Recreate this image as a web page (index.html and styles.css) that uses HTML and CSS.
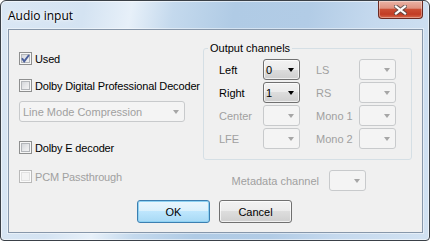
FILE: index.html
```html
<!DOCTYPE html>
<html>
<head>
<meta charset="utf-8">
<title>Audio input</title>
<link rel="stylesheet" href="styles.css">
</head>
<body>
<div class="window">
  <div class="titlebar">
    <span class="title">Audio input</span>
    <div class="close">
      <svg width="13" height="10" viewBox="0 0 13 10">
        <path d="M2 1.5 L11 8.5 M11 1.5 L2 8.5" stroke="#4a4a4a" stroke-opacity="0.75" stroke-width="4.2" stroke-linecap="square" fill="none"/>
        <path d="M2 1.5 L11 8.5 M11 1.5 L2 8.5" stroke="#ffffff" stroke-width="2.2" stroke-linecap="square" fill="none"/>
      </svg>
    </div>
  </div>
  <div class="client">
    <div class="main">
      <div class="left">
        <label class="check row-used"><span class="box"><svg width="9" height="9" viewBox="0 0 9 9"><polyline points="1,4.3 3.2,7.4 8,1" fill="none" stroke="#4a5f9c" stroke-width="1.9"/></svg></span>Used</label>
        <label class="check row-dolby"><span class="box"></span>Dolby Digital Professional Decoder</label>
        <div class="combo wide row-line"><span class="val">Line Mode Compression</span><span class="arrow"></span></div>
        <label class="check row-dolbye"><span class="box"></span>Dolby E decoder</label>
        <label class="check dis row-pcm"><span class="box"></span>PCM Passthrough</label>
      </div>
      <div class="right">
        <fieldset class="group">
          <legend>Output channels</legend>
          <div class="grid">
            <span class="lbl">Left</span>
            <span class="combo on"><span class="val">0</span><span class="arrow"></span></span>
            <span class="lbl dis col2">LS</span>
            <span class="combo"><span class="val"></span><span class="arrow"></span></span>

            <span class="lbl">Right</span>
            <span class="combo on"><span class="val">1</span><span class="arrow"></span></span>
            <span class="lbl dis col2">RS</span>
            <span class="combo"><span class="val"></span><span class="arrow"></span></span>

            <span class="lbl dis">Center</span>
            <span class="combo"><span class="val"></span><span class="arrow"></span></span>
            <span class="lbl dis col2">Mono 1</span>
            <span class="combo"><span class="val"></span><span class="arrow"></span></span>

            <span class="lbl dis">LFE</span>
            <span class="combo"><span class="val"></span><span class="arrow"></span></span>
            <span class="lbl dis col2">Mono 2</span>
            <span class="combo"><span class="val"></span><span class="arrow"></span></span>
          </div>
        </fieldset>
        <div class="meta">
          <span class="lbl dis">Metadata channel</span>
          <span class="combo"><span class="val"></span><span class="arrow"></span></span>
        </div>
      </div>
    </div>
    <div class="buttons">
      <button class="btn default">OK</button>
      <button class="btn">Cancel</button>
    </div>
  </div>
</div>
</body>
</html>
```

FILE: styles.css
```css
* { box-sizing: border-box; }

html, body {
  margin: 0;
  padding: 0;
  background: #ffffff;
}

body {
  width: 430px;
  height: 241px;
  overflow: hidden;
  font-family: "Liberation Sans", Arial, sans-serif;
  font-size: 11px;
  color: #000;
}

.window {
  width: 430px;
  height: 241px;
  border: 1px solid #3a4047;
  border-radius: 6px 6px 4px 4px;
  background: linear-gradient(100deg, #dae7f4 0%, #d4e3f2 18%, #e7f0f9 28%, #c4d9ed 37%, #b0cbe5 50%, #b2cce6 66%, #c5d9ee 80%, #d2e2f2 100%);
  box-shadow: inset 0 0 0 1px rgba(255, 255, 255, 0.55);
  display: flex;
  flex-direction: column;
  overflow: hidden;
}

.titlebar {
  height: 28px;
  flex: none;
  display: flex;
  align-items: center;
  justify-content: space-between;
  padding: 0 6px 0 7px;
}

.title {
  font-family: "Open Sans", "Noto Sans", sans-serif;
  font-size: 12px;
  color: #000;
  text-shadow: 0 0 6px rgba(255, 255, 255, 0.95), 0 0 3px rgba(255, 255, 255, 0.9);
  margin-top: 1px;
}

.close {
  align-self: flex-start;
  margin-top: -1px;
  width: 45px;
  height: 19px;
  border: 1px solid #6b2a22;
  border-top-color: #5a2a24;
  border-radius: 0 0 4px 4px;
  background: linear-gradient(#eab3a5 0%, #df9280 42%, #cb4d33 50%, #c23c24 78%, #d8694b 100%);
  box-shadow: inset 0 0 0 1px rgba(255, 255, 255, 0.35);
  display: flex;
  align-items: center;
  justify-content: center;
  padding-top: 1px;
}

.close svg { display: block; }

.client {
  margin: 0 6px 0 7px;
  height: 204px;
  flex: none;
  background: #f0f0f0;
  border: 1px solid #8797aa;
  box-shadow: 0 0 0 1px rgba(255, 255, 255, 0.45);
  display: flex;
  flex-direction: column;
}

.main {
  display: flex;
  align-items: flex-start;
}

.left {
  width: 194px;
  flex: none;
  padding: 22px 0 0 10px;
  display: flex;
  flex-direction: column;
  align-items: flex-start;
}

.check {
  display: flex;
  align-items: center;
  height: 13px;
  gap: 3px;
  white-space: nowrap;
  letter-spacing: -0.15px;
}

.box {
  width: 13px;
  height: 13px;
  flex: none;
  border: 1px solid #8e8f8f;
  background: linear-gradient(135deg, #cbced3 0%, #e8e9eb 55%, #f8f8f8 100%);
  box-shadow: inset 0 0 0 1px #f6f6f6, inset 0 0 0 2px #b3b6ba;
  display: flex;
  align-items: center;
  justify-content: center;
}

.box svg { display: block; }

.check.dis { color: #a0a0a0; }

.check.dis .box {
  border-color: #b9b9b9;
  background: #f4f4f4;
  box-shadow: inset 0 0 0 1px #fbfbfb, inset 0 0 0 2px #e2e2e2;
}

.row-dolby { margin-top: 14px; }
.row-line { margin-top: 9px; }
.row-dolbye { margin-top: 19px; }
.row-pcm { margin-top: 16px; }

.combo {
  width: 37px;
  height: 21px;
  flex: none;
  border: 1px solid #c8cacc;
  border-radius: 3px;
  background: #f4f4f4;
  display: flex;
  align-items: center;
  justify-content: space-between;
  padding: 0 5px 0 2px;
  color: #a0a0a0;
}

.combo .arrow {
  width: 0;
  height: 0;
  border-left: 3.5px solid transparent;
  border-right: 3.5px solid transparent;
  border-top: 4px solid #a6a6a6;
  flex: none;
}

.combo.on {
  border-color: #707070;
  background: linear-gradient(#f2f2f2 0%, #ebebeb 50%, #dddddd 50%, #cfcfcf 100%);
  box-shadow: inset 0 0 0 1px rgba(255, 255, 255, 0.65);
  color: #000;
}

.combo.on .arrow { border-top-color: #000; }

.combo.wide {
  width: 166px;
  padding-left: 3px;
}

.right {
  width: 209px;
  flex: none;
  padding-top: 11px;
}

.group {
  margin: 0;
  padding: 0;
  border: 1px solid #d5dfe5;
  border-radius: 3px;
  min-inline-size: 0;
  box-shadow: 0 0 0 0 transparent;
}

.group legend {
  margin-left: 4px;
  padding: 0 2px;
  line-height: 15px;
  font-size: 11px;
  color: #000;
}

.grid {
  display: grid;
  grid-template-columns: 44px 37px 59px 37px;
  grid-auto-rows: 21px;
  row-gap: 2px;
  align-items: center;
  padding: 3px 0 10px 15px;
}

.lbl {
  white-space: nowrap;
  color: #000;
}

.lbl.dis { color: #a0a0a0; }

.lbl.col2 { padding-left: 16px; }

.meta {
  margin-top: 10px;
  display: flex;
  align-items: center;
  justify-content: flex-end;
  gap: 10px;
  padding-right: 46px;
  height: 21px;
}

.buttons {
  margin-top: 9px;
  display: flex;
  justify-content: center;
  gap: 9px;
  padding-right: 2px;
}

.btn {
  width: 73px;
  height: 23px;
  margin: 0;
  padding: 0;
  border: 1px solid #707070;
  border-radius: 3px;
  background: linear-gradient(#f2f2f2 0%, #ebebeb 50%, #dddddd 50%, #cfcfcf 100%);
  box-shadow: inset 0 0 0 1px rgba(255, 255, 255, 0.7);
  font-family: "Liberation Sans", Arial, sans-serif;
  font-size: 11px;
  color: #000;
}

.btn.default {
  border-color: #3c7fb1;
  background: linear-gradient(#eaf6fd 0%, #d9f0fc 50%, #bee6fd 50%, #a7d9f5 100%);
  box-shadow: inset 0 0 0 1px #8fd2f3;
}
```
